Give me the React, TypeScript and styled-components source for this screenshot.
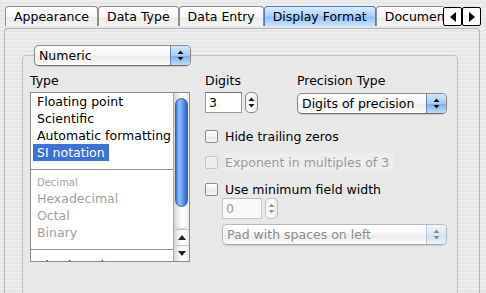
import styled, { createGlobalStyle } from 'styled-components';

const stripes =
  'repeating-linear-gradient(to bottom, #ededed 0px, #ededed 2px, #e6e6e6 2px, #e6e6e6 4px)';

const GlobalStyle = createGlobalStyle`
  html, body {
    margin: 0;
    padding: 0;
  }
  body {
    width: 486px;
    height: 293px;
    overflow: hidden;
    font-family: 'DejaVu Sans', 'Liberation Sans', sans-serif;
    font-size: 12.5px;
    color: #000000;
    background: ${stripes};
  }
`;

const tabs = ['Appearance', 'Data Type', 'Data Entry', 'Display Format', 'Documentation'];
const activeTab = 'Display Format';

const numberTypes = ['Floating point', 'Scientific', 'Automatic formatting', 'SI notation'];
const intTypes = ['Hexadecimal', 'Octal', 'Binary'];

function ArrowPair({ color }: { color: string }) {
  return (
    <svg width='7' height='11' viewBox='0 0 7 11'>
      <polygon points='3.5,0.5 6.5,4 0.5,4' fill={color} />
      <polygon points='0.5,7 6.5,7 3.5,10.5' fill={color} />
    </svg>
  );
}

function Popup({ label, width, disabled }: { label: string; width: number; disabled?: boolean }) {
  return (
    <PopupFrame $width={width} $disabled={disabled}>
      <PopupLabel $disabled={disabled}>{label}</PopupLabel>
      <PopupArrows $disabled={disabled}>
        <ArrowPair color={disabled ? '#8c8c8c' : '#111111'} />
      </PopupArrows>
    </PopupFrame>
  );
}

function NumberField({ value, disabled, width }: { value: string; disabled?: boolean; width: number }) {
  return (
    <FieldRow>
      <Field $width={width} $disabled={disabled}>
        {value}
      </Field>
      <Stepper $disabled={disabled}>
        <ArrowPair color={disabled ? '#9a9a9a' : '#111111'} />
      </Stepper>
    </FieldRow>
  );
}

function App() {
  return (
    <>
      <GlobalStyle />
      <TabStrip>
        <Tabs>
          {tabs.map((t) => (
            <Tab key={t} $active={t === activeTab}>
              {t}
            </Tab>
          ))}
        </Tabs>
        <ScrollButton>
          <Triangle $dir='left' />
        </ScrollButton>
        <ScrollButton>
          <Triangle $dir='right' />
        </ScrollButton>
      </TabStrip>
      <Pane>
        <GroupBox>
          <Popup label='Numeric' width={157} />
          <Body>
            <Column>
              <Label>Type</Label>
              <ListBox>
                <ListContent>
                  {numberTypes.map((t) => (
                    <Item key={t} $selected={t === 'SI notation'}>
                      <span>{t}</span>
                    </Item>
                  ))}
                  <Separator />
                  <GroupHeader>Decimal</GroupHeader>
                  {intTypes.map((t) => (
                    <Item key={t} $disabled>
                      <span>{t}</span>
                    </Item>
                  ))}
                  <Separator $after={7} />
                  <Item>
                    <span>Absolute time</span>
                  </Item>
                </ListContent>
                <ScrollBar>
                  <Track>
                    <Thumb />
                  </Track>
                  <ScrollArrow>
                    <Triangle $dir='up' />
                  </ScrollArrow>
                  <ScrollArrow>
                    <Triangle $dir='down' />
                  </ScrollArrow>
                </ScrollBar>
              </ListBox>
            </Column>
            <Column>
              <TopRow>
                <DigitsCol>
                  <Label>Digits</Label>
                  <NumberField value='3' width={37} />
                </DigitsCol>
                <Column>
                  <Label>Precision Type</Label>
                  <PopupSlot>
                    <Popup label='Digits of precision' width={150} />
                  </PopupSlot>
                </Column>
              </TopRow>
              <CheckRow $gap={13}>
                <CheckBox />
                <CheckLabel>Hide trailing zeros</CheckLabel>
              </CheckRow>
              <CheckRow $gap={8}>
                <CheckBox $disabled />
                <CheckLabel $disabled>Exponent in multiples of 3</CheckLabel>
              </CheckRow>
              <CheckRow $gap={9}>
                <CheckBox />
                <CheckLabel>Use minimum field width</CheckLabel>
              </CheckRow>
              <Indented>
                <NumberField value='0' width={40} disabled />
                <PopupSlot $gap={5}>
                  <Popup label='Pad with spaces on left' width={225} disabled />
                </PopupSlot>
              </Indented>
            </Column>
          </Body>
        </GroupBox>
      </Pane>
    </>
  );
}

export default App;

const TabStrip = styled.div`
  display: flex;
  align-items: flex-start;
  height: 21px;
  padding: 6px 0 0 5px;
`;
const Tabs = styled.div`
  display: flex;
  width: 438px;
  overflow: hidden;
`;
const Tab = styled.div<{ $active?: boolean }>`
  flex-shrink: 0;
  height: 20px;
  box-sizing: border-box;
  padding: 0 8px;
  line-height: 19px;
  white-space: nowrap;
  border: 1px solid ${(p) => (p.$active ? '#4b7fd1' : '#8e8e8e')};
  border-bottom: none;
  border-radius: 4px 4px 0 0;
  background: ${(p) =>
    p.$active
      ? 'linear-gradient(to bottom, #dcebfd 0%, #b2d3f9 45%, #94c2f6 55%, #c9e3fd 100%)'
      : 'linear-gradient(to bottom, #ffffff 0%, #f7f7f7 50%, #ebebeb 56%, #f4f4f4 100%)'};
`;
const ScrollButton = styled.div`
  width: 19px;
  height: 19px;
  box-sizing: border-box;
  margin-top: 1px;
  border: 1px solid #000000;
  border-radius: 2px;
  background: #ffffff;
  display: flex;
  align-items: center;
  justify-content: center;
`;
const Triangle = styled.div<{ $dir: 'left' | 'right' | 'up' | 'down' }>`
  width: 0;
  height: 0;
  ${(p) =>
    p.$dir === 'left'
      ? 'border-top: 5px solid transparent; border-bottom: 5px solid transparent; border-right: 6px solid #000;'
      : p.$dir === 'right'
        ? 'border-top: 5px solid transparent; border-bottom: 5px solid transparent; border-left: 6px solid #000;'
        : p.$dir === 'up'
          ? 'border-left: 4px solid transparent; border-right: 4px solid transparent; border-bottom: 5px solid #222;'
          : 'border-left: 4px solid transparent; border-right: 4px solid transparent; border-top: 5px solid #222;'}
`;
const Pane = styled.div`
  margin: 1px 0 0 4px;
  width: 476px;
  height: 280px;
  box-sizing: border-box;
  border: 1px solid #b6b6b6;
  border-bottom: none;
  border-radius: 4px 4px 0 0;
  padding: 26px 0 0 17px;
`;
const GroupBox = styled.div`
  width: 436px;
  height: 260px;
  box-sizing: border-box;
  border: 1px solid #c2c2c2;
  border-radius: 4px;
  background: #e8e8e8;
  padding-left: 11px;
  > :first-child {
    margin-top: -11px;
  }
`;
const Body = styled.div`
  display: flex;
  gap: 15px;
  padding: 7px 0 0 0;
  margin-left: -4px;
`;
const Column = styled.div`
  display: flex;
  flex-direction: column;
`;
const Label = styled.div`
  height: 16px;
  line-height: 16px;
  white-space: nowrap;
`;
const ListBox = styled.div`
  display: flex;
  margin-top: 3px;
  width: 160px;
  height: 170px;
  box-sizing: border-box;
  border: 1px solid #8c8c8c;
  background: #ffffff;
  overflow: hidden;
`;
const ListContent = styled.div`
  flex: 1;
  overflow: hidden;
`;
const Item = styled.div<{ $selected?: boolean; $disabled?: boolean }>`
  height: 17px;
  line-height: 17px;
  padding-left: 2px;
  white-space: nowrap;
  color: ${(p) => (p.$disabled ? '#a2a2a2' : '#000000')};
  span {
    padding: 0 4px;
    display: inline-block;
    background: ${(p) => (p.$selected ? '#3b72d4' : 'transparent')};
    color: ${(p) => (p.$selected ? '#ffffff' : 'inherit')};
  }
`;
const Separator = styled.div<{ $after?: number }>`
  height: 1px;
  background: #8e8e8e;
  margin: 8px 0 ${(p) => p.$after ?? 6}px;
`;
const GroupHeader = styled.div`
  height: 14px;
  line-height: 14px;
  padding-left: 6px;
  font-size: 10px;
  color: #a2a2a2;
`;
const ScrollBar = styled.div`
  width: 15px;
  display: flex;
  flex-direction: column;
  border-left: 1px solid #a8a8a8;
  background: linear-gradient(to right, #d4d4d4 0%, #f3f3f3 35%, #ffffff 60%, #ececec 100%);
`;
const Track = styled.div`
  flex: 1;
  padding: 5px 1px 0 1px;
  border-bottom: 1px solid #cfcfcf;
  border-radius: 0 0 7px 7px;
`;
const Thumb = styled.div`
  height: 109px;
  box-sizing: border-box;
  border: 1px solid #2f62bd;
  border-radius: 7px;
  background: linear-gradient(
    to right,
    #3a74d6 0%,
    #8ec0f7 28%,
    #6aa6ee 55%,
    #3f7fde 80%,
    #2c63c6 100%
  );
`;
const ScrollArrow = styled.div`
  height: 15px;
  border-top: 1px solid #c4c4c4;
  display: flex;
  align-items: center;
  justify-content: center;
`;
const TopRow = styled.div`
  display: flex;
`;
const DigitsCol = styled.div`
  width: 92px;
  display: flex;
  flex-direction: column;
`;
const FieldRow = styled.div`
  display: flex;
  gap: 3px;
  margin-top: 3px;
`;
const Field = styled.div<{ $width: number; $disabled?: boolean }>`
  width: ${(p) => p.$width}px;
  height: 21px;
  box-sizing: border-box;
  padding-left: 3px;
  line-height: 19px;
  border: 1px solid ${(p) => (p.$disabled ? '#c9c9c9' : '#9a9a9a')};
  border-top-color: ${(p) => (p.$disabled ? '#bdbdbd' : '#6f6f6f')};
  background: ${(p) => (p.$disabled ? '#f8f8f8' : '#ffffff')};
  color: ${(p) => (p.$disabled ? '#9a9a9a' : '#000000')};
`;
const Stepper = styled.div<{ $disabled?: boolean }>`
  width: 13px;
  height: 21px;
  box-sizing: border-box;
  border: 1px solid ${(p) => (p.$disabled ? '#c0c0c0' : '#8a8a8a')};
  border-radius: 5px;
  background: linear-gradient(to right, #f2f2f2, #ffffff 50%, #e8e8e8);
  display: flex;
  align-items: center;
  justify-content: center;
`;
const PopupSlot = styled.div<{ $gap?: number }>`
  margin-top: ${(p) => p.$gap ?? 4}px;
`;
const PopupFrame = styled.div<{ $width: number; $disabled?: boolean }>`
  display: flex;
  width: ${(p) => p.$width}px;
  height: 21px;
  box-sizing: border-box;
  border: 1px solid ${(p) => (p.$disabled ? '#b9b9b9' : '#8a8a8a')};
  border-bottom-color: ${(p) => (p.$disabled ? '#a8a8a8' : '#6a6a6a')};
  border-radius: 5px;
  overflow: hidden;
  background: linear-gradient(to bottom, #ffffff 0%, #f6f6f6 50%, #ececec 55%, #fbfbfb 100%);
  box-shadow: 0 1px 1px rgba(0, 0, 0, 0.12);
`;
const PopupLabel = styled.div<{ $disabled?: boolean }>`
  flex: 1;
  padding-left: 4px;
  line-height: 19px;
  white-space: nowrap;
  color: ${(p) => (p.$disabled ? '#8c8c8c' : '#000000')};
`;
const PopupArrows = styled.div<{ $disabled?: boolean }>`
  width: 19px;
  display: flex;
  align-items: center;
  justify-content: center;
  border-left: 1px solid ${(p) => (p.$disabled ? '#b4c6dd' : '#5d87c4')};
  background: ${(p) =>
    p.$disabled
      ? 'linear-gradient(to bottom, #eef4fc 0%, #dde9f7 50%, #d2e3f6 55%, #e8f1fc 100%)'
      : 'linear-gradient(to bottom, #d3e6fb 0%, #a7cbf5 50%, #82b3ef 55%, #bcdbfb 100%)'};
`;
const CheckRow = styled.div<{ $gap: number }>`
  display: flex;
  align-items: center;
  gap: 7px;
  height: 18px;
  margin-top: ${(p) => p.$gap}px;
`;
const CheckBox = styled.div<{ $disabled?: boolean }>`
  width: 13px;
  height: 13px;
  box-sizing: border-box;
  border: 1px solid ${(p) => (p.$disabled ? '#c6c6c6' : '#8a8a8a')};
  border-radius: 2px;
  background: ${(p) =>
    p.$disabled ? '#eeeeee' : 'linear-gradient(to bottom, #ffffff, #f1f1f1 50%, #e6e6e6 55%, #f8f8f8)'};
`;
const CheckLabel = styled.div<{ $disabled?: boolean }>`
  white-space: nowrap;
  line-height: 19px;
  color: ${(p) => (p.$disabled ? '#9a9a9a' : '#000000')};
  background: ${(p) => (p.$disabled ? '#eeeeee' : 'transparent')};
  padding-right: ${(p) => (p.$disabled ? '4px' : '0')};
`;
const Indented = styled.div`
  padding-left: 17px;
  display: flex;
  flex-direction: column;
  > :first-child {
    margin-top: 0;
  }
`;
